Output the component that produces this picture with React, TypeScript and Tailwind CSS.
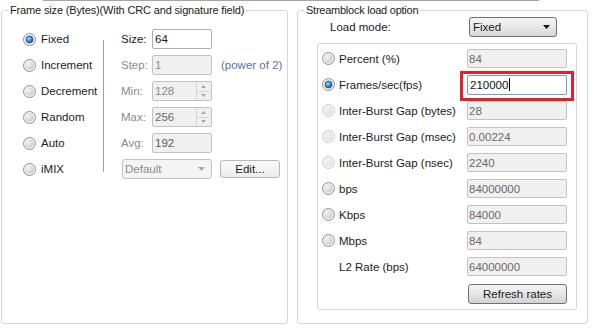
import React, { useId } from "react";

function Radio({ checked = false, disabled = false }: { checked?: boolean; disabled?: boolean }) {
  const id = useId().replace(/:/g, "");
  return (
    <svg width="13" height="13" viewBox="0 0 13 13" className="shrink-0">
      <defs>
        <radialGradient id={`in${id}`} cx="0.35" cy="0.35" r="0.8">
          <stop offset="0" stopColor={disabled ? "#f2f2f2" : "#f4f4f4"} />
          <stop offset="1" stopColor={disabled ? "#dedede" : "#c4c4c4"} />
        </radialGradient>
        <radialGradient id={`dot${id}`} cx="0.4" cy="0.35" r="0.75">
          <stop offset="0" stopColor="#9fdcff" />
          <stop offset="0.55" stopColor="#2b8ad6" />
          <stop offset="1" stopColor="#0b4f93" />
        </radialGradient>
      </defs>
      <circle cx="6.5" cy="6.5" r="6" fill={disabled ? "#f7f7f7" : "#f3f3f3"} stroke={disabled ? "#c9c9c9" : "#8f8f8f"} strokeWidth="1" />
      <circle cx="6.5" cy="6.5" r="4.3" fill={`url(#in${id})`} />
      {checked && <circle cx="6.5" cy="6.5" r="3.4" fill={`url(#dot${id})`} stroke="#1d4f7e" strokeWidth="0.8" />}
    </svg>
  );
}

function Spinner() {
  return (
    <div className="ml-auto mr-[1px] flex h-[18px] w-[14px] flex-col border-l border-[#d4d4d4]">
      <div className="flex flex-1 items-center justify-center border-b border-[#d4d4d4]">
        <svg width="5" height="3" viewBox="0 0 5 3"><path d="M0 3 L2.5 0 L5 3 Z" fill="#a8a8a8" /></svg>
      </div>
      <div className="flex flex-1 items-center justify-center">
        <svg width="5" height="3" viewBox="0 0 5 3"><path d="M0 0 L2.5 3 L5 0 Z" fill="#a8a8a8" /></svg>
      </div>
    </div>
  );
}

const disabledBox =
  "flex h-[20px] w-[60px] items-center rounded-[2px] border border-[#c2c2c2] bg-[#f0f0f0] pl-[2px]";

function RightRow({
  label,
  value,
  radio,
  checked,
  disabled,
}: {
  label: string;
  value: string;
  radio?: boolean;
  checked?: boolean;
  disabled?: boolean;
}) {
  return (
    <div className="flex h-[19px] items-center">
      <div className="flex w-[149px] items-center gap-[4px] pl-[4px]">
        {radio ? <Radio checked={checked} disabled={disabled} /> : <div className="w-[13px]" />}
        <span className="text-[#1b1b1b]">{label}</span>
      </div>
      <div className="flex h-[19px] w-[100px] items-center rounded-[2px] border border-[#c2c2c2] bg-[#f0f0f0] pl-[1px] text-[#6a6a6a]">
        {value}
      </div>
    </div>
  );
}

export default function App() {
  const leftRadios = ["Fixed", "Increment", "Decrement", "Random", "Auto", "iMIX"];
  return (
    <div className="relative h-[329px] w-[594px] overflow-hidden bg-white font-['Liberation_Sans',Arial,sans-serif] text-[11.5px] leading-[14px] text-[#1b1b1b]">
      <div className="ml-[43px] h-px w-[496px] bg-[#a5a5a5]" />
      <div className="mt-[2px] flex">
        {/* Left group */}
        <fieldset className="ml-[1px] h-[321px] w-[287px] rounded-[3px] border border-[#d5d5d5]">
          <legend className="ml-[6px] px-[2px] text-[11px] leading-[14px] tracking-[-0.15px] text-[#1b1b1b]">
            Frame size (Bytes)(With CRC and signature field)
          </legend>
          <div className="flex pl-[21px] pt-[12px]">
            <div className="flex w-[80px] flex-col gap-[6px]">
              {leftRadios.map((r, i) => (
                <div key={r} className="flex h-[20px] items-center gap-[5px]">
                  <Radio checked={i === 0} />
                  <span>{r}</span>
                </div>
              ))}
            </div>
            <div className="mt-[11px] h-[132px] w-px bg-[#a0a0a0]" />
            <div className="ml-[17px] flex flex-col gap-[6px]">
              <div className="flex h-[20px] items-center">
                <span className="w-[31px] text-[#1b1b1b]">Size:</span>
                <div className="flex h-[20px] w-[60px] items-center rounded-[2px] border border-[#abadb3] bg-white pl-[2px]">
                  64
                </div>
              </div>
              <div className="flex h-[20px] items-center">
                <span className="w-[31px] text-[#8a8a8a]">Step:</span>
                <div className={disabledBox + " text-[#8a8a8a]"}>1</div>
                <span className="ml-[9px] text-[#5573a0]">(power of 2)</span>
              </div>
              <div className="flex h-[20px] items-center">
                <span className="w-[31px] text-[#8a8a8a]">Min:</span>
                <div className={disabledBox + " text-[#8a8a8a]"}>
                  128
                  <Spinner />
                </div>
              </div>
              <div className="flex h-[20px] items-center">
                <span className="w-[31px] text-[#8a8a8a]">Max:</span>
                <div className={disabledBox + " text-[#6a6a6a]"}>
                  256
                  <Spinner />
                </div>
              </div>
              <div className="flex h-[20px] items-center">
                <span className="w-[31px] text-[#8a8a8a]">Avg:</span>
                <div className={disabledBox + " text-[#5a5a5a]"}>192</div>
              </div>
              <div className="flex h-[20px] items-center">
                <div className="ml-[1px] flex h-[20px] w-[90px] items-center rounded-[3px] border border-[#c2c2c2] bg-[#f4f4f4] pl-[2px] text-[#8a8a8a]">
                  Default
                  <svg className="ml-auto mr-[6px]" width="7" height="4" viewBox="0 0 7 4">
                    <path d="M0 0 L3.5 4 L7 0 Z" fill="#a8a8a8" />
                  </svg>
                </div>
                <div className="ml-[8px] flex h-[18px] w-[60px] items-center justify-center rounded-[3px] border border-[#b8b8b8] bg-gradient-to-b from-[#fafafa] to-[#ececec] text-[#1b1b1b]">
                  Edit...
                </div>
              </div>
            </div>
          </div>
        </fieldset>

        {/* Right group */}
        <fieldset className="ml-[9px] h-[321px] w-[291px] rounded-[3px] border border-[#d5d5d5]">
          <legend className="ml-[6px] px-[2px] text-[11px] leading-[14px] tracking-[-0.25px] text-[#1b1b1b]">
            Streamblock load option
          </legend>
          <div className="flex h-[20px] items-center pl-[32px]">
            <span className="w-[139px]">Load mode:</span>
            <div className="flex h-[20px] w-[88px] items-center rounded-[3px] border border-[#707070] bg-gradient-to-b from-[#f4f4f4] via-[#e8e8e8] to-[#d6d6d6] pl-[3px]">
              Fixed
              <svg className="ml-auto mr-[6px]" width="7" height="4" viewBox="0 0 7 4">
                <path d="M0 0 L3.5 4 L7 0 Z" fill="#111" />
              </svg>
            </div>
          </div>
          <div className="ml-[19px] mt-[6px] flex w-[260px] flex-col rounded-[3px] border border-[#d5d5d5] pb-[5px] pt-[5px]">
            <div className="flex flex-col gap-[7px]">
              <RightRow radio label="Percent (%)" value="84" />
              <div className="flex h-[19px] items-center">
                <div className="flex w-[149px] items-center gap-[4px] pl-[4px]">
                  <Radio checked />
                  <span>Frames/sec(fps)</span>
                </div>
                <div className="flex h-[20px] w-[100px] items-center rounded-[2px] border border-[#6f9fd0] bg-white pl-[2px] text-[#111]">
                  210000
                  <span className="ml-[1px] inline-block h-[13px] w-px bg-black" />
                </div>
              </div>
              <RightRow radio disabled label="Inter-Burst Gap (bytes)" value="28" />
              <RightRow radio disabled label="Inter-Burst Gap (msec)" value="0.00224" />
              <RightRow radio disabled label="Inter-Burst Gap (nsec)" value="2240" />
              <RightRow radio label="bps" value="84000000" />
              <RightRow radio label="Kbps" value="84000" />
              <RightRow radio label="Mbps" value="84" />
              <RightRow label="L2 Rate (bps)" value="64000000" />
            </div>
            <div className="ml-[150px] mt-[8px] flex h-[20px] w-[99px] items-center justify-center rounded-[3px] border border-[#707070] bg-gradient-to-b from-[#f4f4f4] via-[#e6e6e6] to-[#d2d2d2]">
              Refresh rates
            </div>
          </div>
        </fieldset>
      </div>

      {/* red annotation highlight */}
      <div className="pointer-events-none absolute left-[460px] top-[71px] h-[30px] w-[114px] border-[3px] border-[#e3202c]" />
    </div>
  );
}
